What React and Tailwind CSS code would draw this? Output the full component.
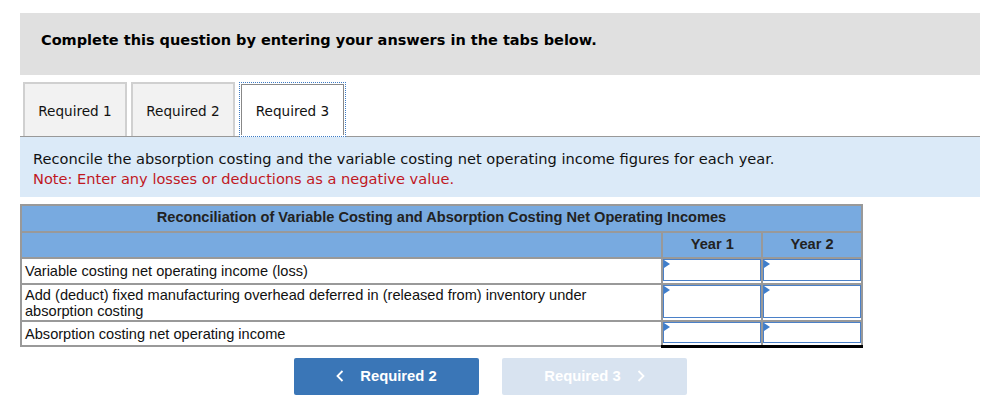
import React from "react";

const verdana = { fontFamily: '"DejaVu Sans", Verdana, sans-serif' };
const arial = { fontFamily: '"Liberation Sans", Arial, sans-serif' };

function Marker() {
  return (
    <svg className="absolute left-0 top-0" width="6" height="8" viewBox="0 0 6 8">
      <polygon points="0,0 6,4 0,8" fill="#3f7ecb" />
    </svg>
  );
}

function InputCell({ tall }) {
  return (
    <td className="border-2 border-[#999] p-0 bg-white align-top">
      <div className={`relative border border-[#4a80c8] bg-white ${tall ? "h-[33px]" : "h-[22px]"}`}>
        <Marker />
      </div>
    </td>
  );
}

function LastInputCell() {
  return (
    <td className="border-2 border-[#999] border-b-[3px] border-b-black p-0 bg-white align-top">
      <div className="relative border border-[#4a80c8] bg-white h-[21px]">
        <Marker />
      </div>
    </td>
  );
}

function ChevronLeft() {
  return (
    <svg width="8" height="12" viewBox="0 0 8 12" fill="none" stroke="currentColor" strokeWidth="1.8">
      <polyline points="6.5,1 1.5,6 6.5,11" />
    </svg>
  );
}
function ChevronRight() {
  return (
    <svg width="8" height="12" viewBox="0 0 8 12" fill="none" stroke="currentColor" strokeWidth="1.8">
      <polyline points="1.5,1 6.5,6 1.5,11" />
    </svg>
  );
}

export default function App() {
  return (
    <div className="w-[994px] h-[414px] bg-white pt-[13px] px-[20px] text-[#222]">
      <div className="w-[960px]">
        <div className="h-[62px] bg-[#e0e0e0] pl-[21px] pt-[15px]" style={verdana}>
          <span className="text-[14.5px] leading-[20px] font-bold text-black">Complete this question by entering your answers in the tabs below.</span>
        </div>

        <div className="mt-[7px] flex items-end gap-[4px] pl-[3px] h-[55px] border-b border-[#999]" style={verdana}>
          <div className="w-[104px] h-[54px] bg-[#f2f2f2] border-2 border-b-0 border-[#d0d0d0] flex items-center justify-center pt-[3px] text-[13.6px] text-[#111]">Required 1</div>
          <div className="w-[104px] h-[54px] bg-[#f2f2f2] border-2 border-b-0 border-[#d0d0d0] flex items-center justify-center pt-[3px] text-[13.6px] text-[#111]">Required 2</div>
          <div className="w-[107px] h-[55px] -mb-px bg-white border border-dotted border-[#3d7bc5] p-px flex">
            <div className="flex-1 border border-b-0 border-[#888] flex items-center justify-center pt-[3px] text-[13.6px] text-[#111]">Required 3</div>
          </div>
        </div>

        <div className="h-[60px] bg-[#dbeaf8] pl-[13px] pt-[12px] text-[14.6px] leading-[20px]" style={verdana}>
          <div className="text-[#111]">Reconcile the absorption costing and the variable costing net operating income figures for each year.</div>
          <div className="text-[#c0181f]">Note: Enter any losses or deductions as a negative value.</div>
        </div>

        <table className="mt-[7px] w-[843px] border-collapse text-[14.6px]" style={arial}>
          <colgroup>
            <col className="w-[643px]" />
            <col className="w-[100px]" />
            <col className="w-[100px]" />
          </colgroup>
          <tbody>
            <tr className="h-[27px] bg-[#78aae0]">
              <td colSpan={3} className="border-2 border-[#999] text-center font-bold text-[#222] pb-[2px]">Reconciliation of Variable Costing and Absorption Costing Net Operating Incomes</td>
            </tr>
            <tr className="h-[26px] bg-[#78aae0]">
              <td className="border-2 border-[#999]"></td>
              <td className="border-2 border-[#999] text-center font-bold text-[#222]">Year 1</td>
              <td className="border-2 border-[#999] text-center font-bold text-[#222]">Year 2</td>
            </tr>
            <tr className="h-[26px]">
              <td className="border-2 border-[#999] px-[3px] leading-[16px] text-[#111]">Variable costing net operating income (loss)</td>
              <InputCell />
              <InputCell />
            </tr>
            <tr className="h-[37px]">
              <td className="border-2 border-[#999] px-[3px] leading-[16px] text-[#111]">Add (deduct) fixed manufacturing overhead deferred in (released from) inventory under<br />absorption costing</td>
              <InputCell tall />
              <InputCell tall />
            </tr>
            <tr className="h-[25px]">
              <td className="border-2 border-[#999] px-[3px] leading-[16px] text-[#111]">Absorption costing net operating income</td>
              <LastInputCell />
              <LastInputCell />
            </tr>
          </tbody>
        </table>

        <div className="mt-[10px] flex gap-[23px] pl-[274px]" style={arial}>
          <button className="w-[185px] h-[37px] rounded-[2px] bg-[#3a76b7] text-white font-bold text-[14.8px] flex items-center justify-center gap-[16px]">
            <ChevronLeft />
            <span>Required 2</span>
          </button>
          <button className="w-[185px] h-[37px] rounded-[2px] bg-[#d8e3f0] text-white font-bold text-[14.8px] flex items-center justify-center gap-[16px]">
            <span>Required 3</span>
            <ChevronRight />
          </button>
        </div>
      </div>
    </div>
  );
}
